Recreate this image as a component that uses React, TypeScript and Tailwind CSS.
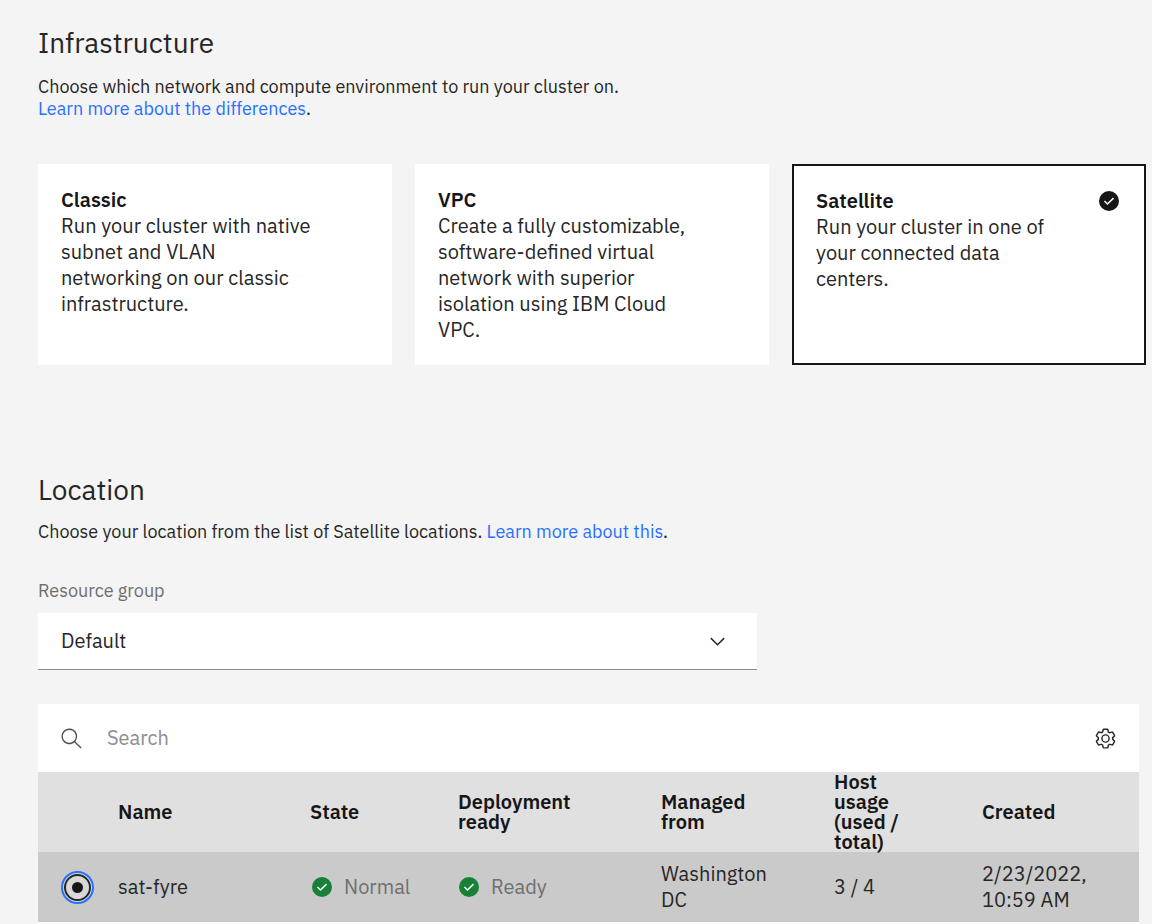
import { useState } from "react";
import type { ReactNode } from "react";

type Environment = { name: string; description: string };

const environments: Environment[] = [
  { name: "Classic", description: "Run your cluster with native subnet and VLAN networking on our classic infrastructure." },
  { name: "VPC", description: "Create a fully customizable, software-defined virtual network with superior isolation using IBM Cloud VPC." },
  { name: "Satellite", description: "Run your cluster in one of your connected data centers." },
];

function CheckIcon({ className }: { className: string }) {
  return (
    <svg viewBox="0 0 20 20" className={`h-5 w-5 shrink-0 ${className}`} aria-hidden="true">
      <circle cx="10" cy="10" r="10" fill="currentColor" />
      <path d="M5.4 10 8.5 13 14.5 7.1" fill="none" stroke="#f4f4f4" strokeWidth="1.6" />
    </svg>
  );
}

function SearchIcon() {
  return (
    <svg viewBox="0 0 16 16" className="h-[23px] w-[23px] shrink-0 text-[#525252]" fill="currentColor" aria-hidden="true">
      <path d="M15 14.3 10.7 10c1.9-2.3 1.6-5.8-.7-7.7S4.2.7 2.3 3 .7 8.8 3 10.7c2 1.7 5 1.7 7 0l4.3 4.3zM2 6.5C2 4 4 2 6.5 2S11 4 11 6.5 9 11 6.5 11 2 9 2 6.5z" />
    </svg>
  );
}

function GearIcon() {
  return (
    <svg viewBox="0 0 32 32" className="h-[23px] w-[23px]" fill="currentColor" aria-hidden="true">
      <path d="M27,16.76c0-.25,0-.5,0-.76s0-.51,0-.77l1.92-1.68A2,2,0,0,0,29.3,11L26.94,7a2,2,0,0,0-1.73-1,2,2,0,0,0-.64.1l-2.43.82a11.35,11.35,0,0,0-1.31-.75l-.51-2.52a2,2,0,0,0-2-1.61H13.64a2,2,0,0,0-2,1.61l-.51,2.52a11.48,11.48,0,0,0-1.32.75L7.43,6.06A2,2,0,0,0,6.79,6,2,2,0,0,0,5.06,7L2.7,11a2,2,0,0,0,.41,2.51L5,15.24c0,.25,0,.5,0,.76s0,.51,0,.77L3.11,18.45A2,2,0,0,0,2.7,21L5.06,25a2,2,0,0,0,1.73,1,2,2,0,0,0,.64-.1l2.43-.82a11.35,11.35,0,0,0,1.31.75l.51,2.52a2,2,0,0,0,2,1.61h4.72a2,2,0,0,0,2-1.61l.51-2.52a11.48,11.48,0,0,0,1.32-.75l2.42.82a2,2,0,0,0,.64.1,2,2,0,0,0,1.73-1L29.3,21a2,2,0,0,0-.41-2.51ZM25.21,24l-3.43-1.16a8.86,8.86,0,0,1-2.71,1.57L18.36,28H13.64l-.71-3.55a9.36,9.36,0,0,1-2.7-1.57L6.79,24,4.43,20l2.72-2.4a8.9,8.9,0,0,1,0-3.13L4.43,12,6.79,8l3.43,1.16a8.86,8.86,0,0,1,2.71-1.57L13.64,4h4.72l.71,3.55a9.36,9.36,0,0,1,2.7,1.57L25.21,8,27.57,12l-2.72,2.4a8.9,8.9,0,0,1,0,3.13L27.57,20Z" />
      <path d="M16,22a6,6,0,1,1,6-6A5.94,5.94,0,0,1,16,22Zm0-10a3.91,3.91,0,0,0-4,4,3.91,3.91,0,0,0,4,4,3.91,3.91,0,0,0,4-4A3.91,3.91,0,0,0,16,12Z" />
    </svg>
  );
}

function Status({ children }: { children: ReactNode }) {
  return (
    <span className="flex items-center gap-3 text-[#6f6f6f]">
      <CheckIcon className="text-[#198038]" />
      {children}
    </span>
  );
}

function TextLink({ children }: { children: ReactNode }) {
  return (
    <a href="#" className="text-[#2970ff] hover:underline">
      {children}
    </a>
  );
}

export default function App() {
  const [selected, setSelected] = useState("Satellite");

  return (
    <main className="min-h-screen bg-[#f4f4f4] pl-[38px] font-['IBM_Plex_Sans','Noto_Sans',sans-serif] text-[20px] leading-[26px] text-[#262626]">
      <section className="pt-6 pr-[6px]">
        <h1 className="text-[28px] leading-[38px]">Infrastructure</h1>
        <p className="mt-[14px] text-[18px] leading-[22px]">
          Choose which network and compute environment to run your cluster on.
          <br />
          <TextLink>Learn more about the differences</TextLink>.
        </p>
        <div className="mt-11 grid grid-cols-3 gap-[23px]">
          {environments.map(({ name, description }) => {
            const active = name === selected;
            return (
              <button
                key={name}
                type="button"
                aria-pressed={active}
                onClick={() => setSelected(name)}
                className={`flex min-h-[201px] items-start justify-between bg-white px-[22px] pt-[22px] pb-5 text-left ${active ? "border-2 border-[#161616]" : "border border-white"}`}
              >
                <span className="w-[256px]">
                  <strong className="block font-semibold text-[#161616]">{name}</strong>
                  <span className="block">{description}</span>
                </span>
                {active && <CheckIcon className="mt-[3px] mr-[3px] text-[#161616]" />}
              </button>
            );
          })}
        </div>
      </section>

      <section className="pt-[106px] pr-[13px]">
        <h2 className="text-[28px] leading-[38px]">Location</h2>
        <p className="mt-3 text-[18px] leading-[22px]">
          Choose your location from the list of Satellite locations. <TextLink>Learn more about this</TextLink>.
        </p>

        <label htmlFor="resource-group" className="mt-[37px] block text-[18px] leading-[22px] text-[#6f6f6f]">
          Resource group
        </label>
        <div className="mt-[11px] grid max-w-[719px] items-center">
          <select
            id="resource-group"
            defaultValue="Default"
            className="col-start-1 row-start-1 h-[57px] w-full appearance-none border-b border-[#8d8d8d] bg-white px-[23px]"
          >
            <option>Default</option>
          </select>
          <svg viewBox="0 0 16 16" className="pointer-events-none col-start-1 row-start-1 mr-7 h-[23px] w-[23px] justify-self-end" fill="currentColor" aria-hidden="true">
            <path d="M8 11 3 6l.7-.7L8 9.6l4.3-4.3.7.7z" />
          </svg>
        </div>

        <div className="mt-[34px] flex h-[68px] items-center bg-white px-[22px]">
          <label htmlFor="location-search" aria-label="Search locations">
            <SearchIcon />
          </label>
          <input
            id="location-search"
            type="search"
            placeholder="Search"
            className="ml-6 min-w-0 flex-1 bg-transparent outline-none placeholder:text-[#8d8d8d]"
          />
          <button type="button" aria-label="Table settings">
            <GearIcon />
          </button>
        </div>

        <table className="w-full table-fixed border-separate border-spacing-0 border-b-2 border-white text-left">
          <colgroup>
            <col className="w-[57px]" />
            <col className="w-[192px]" />
            <col className="w-[148px]" />
            <col className="w-[203px]" />
            <col className="w-[173px]" />
            <col className="w-[148px]" />
            <col className="w-[180px]" />
          </colgroup>
          <thead className="bg-[#e0e0e0] leading-5 text-[#161616]">
            <tr className="h-20">
              <td />
              <th scope="col" className="pl-[23px] font-semibold">Name</th>
              <th scope="col" className="pl-[23px] font-semibold">State</th>
              <th scope="col" className="pr-14 pl-[23px] font-semibold">Deployment ready</th>
              <th scope="col" className="pr-10 pl-[23px] font-semibold">Managed from</th>
              <th scope="col" className="pr-10 pl-[23px] font-semibold">Host usage (used / total)</th>
              <th scope="col" className="pl-[23px] font-semibold">Created</th>
            </tr>
          </thead>
          <tbody className="bg-[#cacaca]">
            <tr className="h-[70px]">
              <td className="pl-[23px]">
                <span className="grid h-[33px] w-[33px] place-items-center rounded-full border-2 border-[#2970ff] bg-[#d8d8d8]">
                  <input
                    type="radio"
                    name="location"
                    aria-label="Select sat-fyre"
                    defaultChecked
                    className="grid h-[27px] w-[27px] appearance-none place-items-center rounded-full border-2 border-[#262626] before:h-[11px] before:w-[11px] before:rounded-full checked:before:bg-[#161616]"
                  />
                </span>
              </td>
              <td className="pl-[23px]">sat-fyre</td>
              <td className="pl-[25px]"><Status>Normal</Status></td>
              <td className="pl-[24px]"><Status>Ready</Status></td>
              <td className="pr-10 pl-[23px]">Washington DC</td>
              <td className="pl-[23px]">3 / 4</td>
              <td className="pr-10 pl-[23px]">2/23/2022, 10:59 AM</td>
            </tr>
          </tbody>
        </table>
      </section>
    </main>
  );
}
